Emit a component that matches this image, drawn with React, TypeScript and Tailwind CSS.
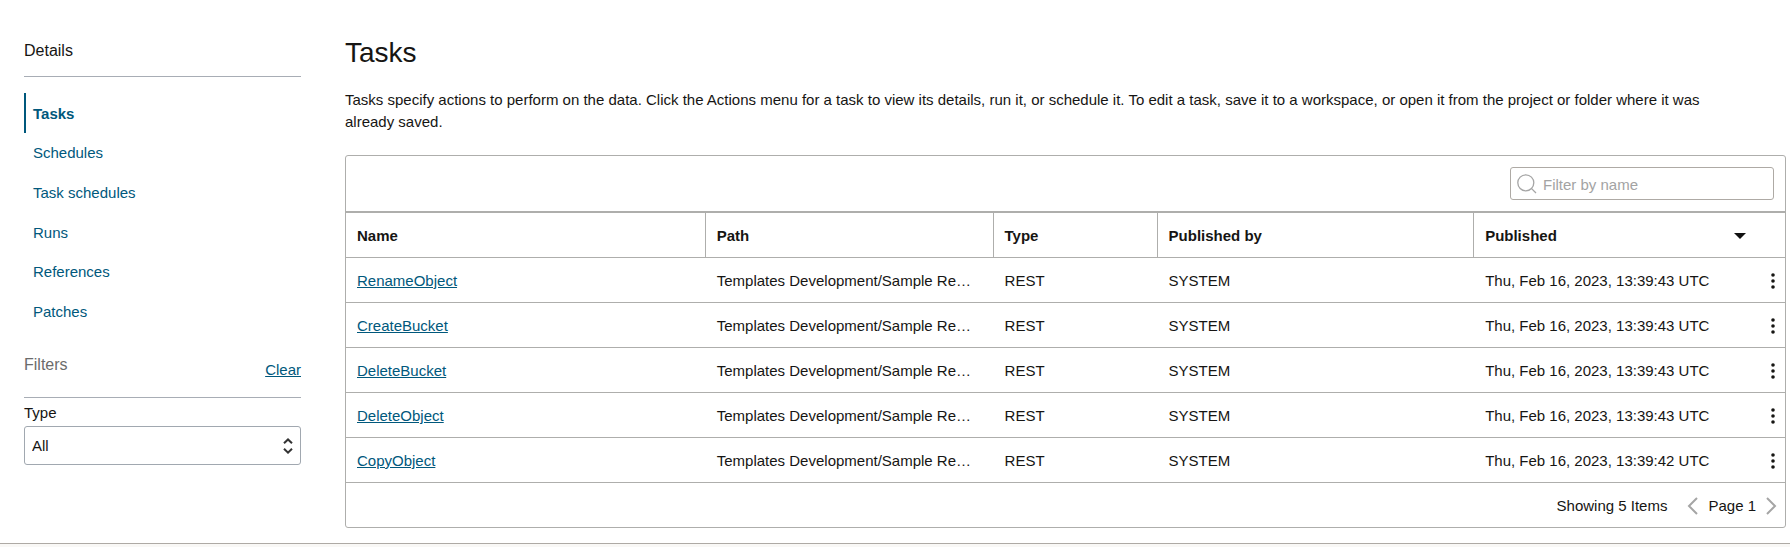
import { useState } from 'react';

type Task = {
  name: string;
  path: string;
  type: string;
  publishedBy: string;
  published: string;
};

const navItems = ['Tasks', 'Schedules', 'Task schedules', 'Runs', 'References', 'Patches'];

const path = 'Templates Development/Sample Re…';

const tasks: Task[] = [
  { name: 'RenameObject', path, type: 'REST', publishedBy: 'SYSTEM', published: 'Thu, Feb 16, 2023, 13:39:43 UTC' },
  { name: 'CreateBucket', path, type: 'REST', publishedBy: 'SYSTEM', published: 'Thu, Feb 16, 2023, 13:39:43 UTC' },
  { name: 'DeleteBucket', path, type: 'REST', publishedBy: 'SYSTEM', published: 'Thu, Feb 16, 2023, 13:39:43 UTC' },
  { name: 'DeleteObject', path, type: 'REST', publishedBy: 'SYSTEM', published: 'Thu, Feb 16, 2023, 13:39:43 UTC' },
  { name: 'CopyObject', path, type: 'REST', publishedBy: 'SYSTEM', published: 'Thu, Feb 16, 2023, 13:39:42 UTC' },
];

function Sidebar() {
  const [type, setType] = useState('All');

  return (
    <aside className="w-[277px] shrink-0">
      <h2 className="border-b border-[#a8adb5] pt-[37px] pb-[11px] text-[16px] leading-7">Details</h2>

      <nav className="mt-4">
        <ul className="grid h-[238px] grid-rows-6">
          {navItems.map((item) => (
            <li key={item} className="flex">
              <a
                href="#"
                className={`flex items-center border-l-2 pt-0.5 pl-[7px] text-[#00587c] ${
                  item === 'Tasks' ? 'border-[#00587c] font-bold' : 'border-transparent'
                }`}
              >
                {item}
              </a>
            </li>
          ))}
        </ul>
      </nav>

      {/* Filters */}
      <div className="mt-4 flex items-start justify-between border-b border-[#a8adb5] pb-4">
        <h2 className="pt-[6px] text-[16px] leading-6 text-[#6b6b6b]">Filters</h2>
        <button type="button" className="pt-3 leading-[22px] text-[#00587c] underline">Clear</button>
      </div>

      <label htmlFor="type" className="mt-1 block leading-[22px]">Type</label>
      <div className="relative mt-0.5">
        <select
          id="type"
          value={type}
          onChange={(e) => setType(e.target.value)}
          className="h-[39px] w-full appearance-none rounded-[3px] border border-[#a1a8b0] bg-white px-[7px] pt-px"
        >
          <option>All</option>
          <option>REST</option>
        </select>
        <svg
          className="pointer-events-none absolute top-3 right-2 h-4 w-[10px]"
          viewBox="0 0 10 16"
          fill="none"
          stroke="#333"
          strokeWidth="2"
        >
          <path d="M1 5.2 5 1.4 9 5.2M1 10.8 5 14.6 9 10.8" />
        </svg>
      </div>
    </aside>
  );
}

function TaskTable() {
  const [filter, setFilter] = useState('');
  const visible = tasks.filter((t) => t.name.toLowerCase().includes(filter.toLowerCase()));

  return (
    <div className="mt-[22px] rounded-[3px] border border-[#aeaeac]">
      <div className="flex justify-end border-b border-[#aeaeac] py-[11px] pr-[11px]">
        <div className="relative">
          <svg
            className="pointer-events-none absolute top-[7px] left-[7px] h-5 w-5"
            viewBox="0 0 20 20"
            fill="none"
            stroke="#a5a5a5"
            strokeWidth="1.3"
          >
            <circle cx="8.8" cy="8.8" r="8" />
            <path d="M14.6 14.6 19 19" />
          </svg>
          <input
            type="text"
            aria-label="Filter by name"
            placeholder="Filter by name"
            value={filter}
            onChange={(e) => setFilter(e.target.value)}
            className="h-[33px] w-[264px] rounded-[3px] border border-[#aeaaa5] pt-px pl-8 placeholder:text-[#a3a3a3]"
          />
        </div>
      </div>

      <table className="w-full table-fixed border-separate border-spacing-0 text-left">
        <thead>
          <tr className="[&>th]:h-[46px] [&>th]:border-y [&>th]:border-[#aeaeac] [&>th]:px-[11px] [&>th]:pt-0.5 [&>th]:font-bold">
            <th className="w-1/4 border-r">Name</th>
            <th className="w-1/5 border-r">Path</th>
            <th className="w-[164px] border-r">Type</th>
            <th className="w-[22%] border-r">Published by</th>
            <th>
              <div className="flex items-center justify-between">
                Published
                <button type="button" aria-label="Sort by published" className="mr-7">
                  <svg className="h-[6px] w-3" viewBox="0 0 12 6" fill="#111">
                    <path d="M0 0h12L6 6z" />
                  </svg>
                </button>
              </div>
            </th>
          </tr>
        </thead>
        <tbody>
          {visible.map((task) => (
            <tr
              key={task.name}
              className="[&>td]:h-[45px] [&>td]:border-b [&>td]:border-[#aeaeac] [&>td]:px-[11px] [&>td]:pt-0.5 [&>td:last-child]:pr-[10px]"
            >
              <td>
                <a href="#" className="text-[#00587c] underline">{task.name}</a>
              </td>
              <td className="truncate">{task.path}</td>
              <td>{task.type}</td>
              <td>{task.publishedBy}</td>
              <td>
                <div className="flex items-center justify-between">
                  {task.published}
                  <button type="button" aria-label={`Actions for ${task.name}`}>
                    <svg className="h-4 w-1" viewBox="0 0 4 16" fill="#161513">
                      <circle cx="2" cy="2" r="1.8" />
                      <circle cx="2" cy="8" r="1.8" />
                      <circle cx="2" cy="14" r="1.8" />
                    </svg>
                  </button>
                </div>
              </td>
            </tr>
          ))}
        </tbody>
      </table>

      <div className="flex h-11 items-center justify-end pt-0.5 pr-2">
        <span>Showing {visible.length} Items</span>
        <button type="button" aria-label="Previous page" className="ml-5">
          <svg className="h-[18px] w-[11px]" viewBox="0 0 11 18" fill="none" stroke="#a5a5a5" strokeWidth="2">
            <path d="M10 1 2 9l8 8" />
          </svg>
        </button>
        <span className="mx-[10px]">Page 1</span>
        <button type="button" aria-label="Next page">
          <svg className="h-[18px] w-[11px]" viewBox="0 0 11 18" fill="none" stroke="#a5a5a5" strokeWidth="2">
            <path d="m1 1 8 8-8 8" />
          </svg>
        </button>
      </div>
    </div>
  );
}

export default function App() {
  return (
    <div className="min-h-screen bg-[#f9f8f6] font-['Liberation_Sans',Arial,sans-serif] text-[15px] leading-[22px] text-[#161513]">
      <div className="flex gap-11 border-b border-[#aeaaa5] bg-white pr-1 pb-[15px] pl-6">
        <Sidebar />
        <main className="min-w-0 flex-1 pt-[33px]">
          <h1 className="text-[28px] leading-10">Tasks</h1>
          <p className="mt-4 pr-12">
            Tasks specify actions to perform on the data. Click the Actions menu for a task to view its details, run it, or
            schedule it. To edit a task, save it to a workspace, or open it from the project or folder where it was already
            saved.
          </p>
          <TaskTable />
        </main>
      </div>
    </div>
  );
}
